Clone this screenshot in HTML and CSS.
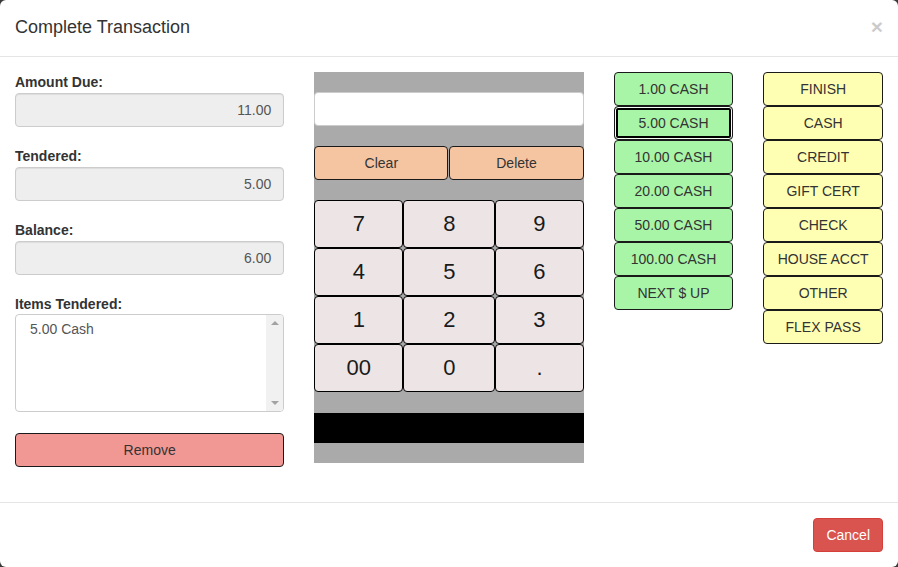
FILE: index.html
```html
<!DOCTYPE html>
<html lang="en">
<head>
<meta charset="utf-8">
<title>Complete Transaction</title>
<link rel="stylesheet" href="styles.css">
</head>
<body>
<div class="modal">
  <div class="modal-header">
    <h4 class="modal-title">Complete Transaction</h4>
    <button class="close" type="button">×</button>
  </div>
  <div class="modal-body">
    <div class="row">
      <div class="col col-4">
        <div class="form-group">
          <label>Amount Due:</label>
          <div class="field">11.00</div>
        </div>
        <div class="form-group">
          <label>Tendered:</label>
          <div class="field">5.00</div>
        </div>
        <div class="form-group">
          <label>Balance:</label>
          <div class="field">6.00</div>
        </div>
        <div class="form-group">
          <label>Items Tendered:</label>
          <div class="listbox">
            <div class="list-items">5.00 Cash</div>
            <div class="scrollbar">
              <span class="arrow up"></span>
              <span class="arrow down"></span>
            </div>
          </div>
        </div>
        <button class="btn-remove" type="button">Remove</button>
      </div>
      <div class="col col-4">
        <div class="pad">
          <div class="display"></div>
          <div class="edit-row">
            <button class="key-edit" type="button">Clear</button>
            <button class="key-edit" type="button">Delete</button>
          </div>
          <div class="keys">
            <button class="key" type="button">7</button>
            <button class="key" type="button">8</button>
            <button class="key" type="button">9</button>
            <button class="key" type="button">4</button>
            <button class="key" type="button">5</button>
            <button class="key" type="button">6</button>
            <button class="key" type="button">1</button>
            <button class="key" type="button">2</button>
            <button class="key" type="button">3</button>
            <button class="key" type="button">00</button>
            <button class="key" type="button">0</button>
            <button class="key" type="button">.</button>
          </div>
          <div class="black-bar"></div>
        </div>
      </div>
      <div class="col col-2">
        <div class="stack">
          <button class="tb green" type="button">1.00 CASH</button>
          <button class="tb green focused" type="button">5.00 CASH</button>
          <button class="tb green" type="button">10.00 CASH</button>
          <button class="tb green" type="button">20.00 CASH</button>
          <button class="tb green" type="button">50.00 CASH</button>
          <button class="tb green" type="button">100.00 CASH</button>
          <button class="tb green" type="button">NEXT $ UP</button>
        </div>
      </div>
      <div class="col col-2">
        <div class="stack">
          <button class="tb yellow" type="button">FINISH</button>
          <button class="tb yellow" type="button">CASH</button>
          <button class="tb yellow" type="button">CREDIT</button>
          <button class="tb yellow" type="button">GIFT CERT</button>
          <button class="tb yellow" type="button">CHECK</button>
          <button class="tb yellow" type="button">HOUSE ACCT</button>
          <button class="tb yellow" type="button">OTHER</button>
          <button class="tb yellow" type="button">FLEX PASS</button>
        </div>
      </div>
    </div>
  </div>
  <div class="modal-footer">
    <button class="btn-cancel" type="button">Cancel</button>
  </div>
</div>
</body>
</html>
```

FILE: styles.css
```css
* {
  box-sizing: border-box;
}

html, body {
  margin: 0;
  padding: 0;
}

body {
  background: #3a3a3a;
  font-family: "Liberation Sans", Arial, sans-serif;
  font-size: 14px;
  line-height: 1.42857;
  color: #333;
  width: 898px;
  height: 567px;
  overflow: hidden;
}

button {
  font-family: inherit;
  cursor: pointer;
}

.modal {
  width: 898px;
  height: 567px;
  background: #fff;
  border-radius: 6px;
  display: flex;
  flex-direction: column;
}

.modal-header {
  display: flex;
  justify-content: space-between;
  align-items: flex-start;
  padding: 15px;
  border-bottom: 1px solid #e5e5e5;
  height: 57px;
}

.modal-title {
  margin: 0;
  font-size: 18px;
  font-weight: normal;
  line-height: 1.42857;
  color: #333;
}

.close {
  border: 0;
  background: transparent;
  padding: 0;
  margin-top: 1px;
  margin-right: 0;
  font-size: 21px;
  font-weight: bold;
  line-height: 1;
  color: #000;
  opacity: 0.2;
}

.modal-body {
  padding: 15px;
  flex: 1;
}

.row {
  display: flex;
  margin: 0 -15px;
}

.col {
  padding: 0 15px;
}

.col-4 {
  width: 33.3333%;
}

.col-2 {
  width: 16.6667%;
}

.form-group {
  margin-bottom: 19px;
}

.form-group label {
  display: block;
  font-weight: bold;
  font-size: 14px;
  line-height: 20px;
  margin-bottom: 1px;
  color: #333;
}

.field {
  height: 34px;
  padding: 6px 12px;
  background: #eee;
  border: 1px solid #ccc;
  border-radius: 4px;
  text-align: right;
  color: #555;
  font-size: 14px;
  line-height: 20px;
  box-shadow: inset 0 1px 1px rgba(0, 0, 0, 0.075);
}

.listbox {
  display: flex;
  height: 98px;
  margin-top: -1px;
  border: 1px solid #ccc;
  border-radius: 4px;
  background: #fff;
  overflow: hidden;
}

.list-items {
  flex: 1;
  padding: 4px 14px;
  color: #555;
  font-size: 14px;
  line-height: 20px;
}

.scrollbar {
  width: 17px;
  background: #f1f1f1;
  display: flex;
  flex-direction: column;
  justify-content: space-between;
  align-items: center;
  padding: 6px 0;
}

.arrow {
  width: 0;
  height: 0;
  border-left: 4px solid transparent;
  border-right: 4px solid transparent;
}

.arrow.up {
  border-bottom: 4px solid #a3a3a3;
}

.arrow.down {
  border-top: 4px solid #a3a3a3;
}

.btn-remove {
  display: block;
  width: 100%;
  height: 34px;
  margin-top: 21px;
  margin-bottom: 20px;
  background: #f19794;
  border: 1px solid #1a1a1a;
  border-radius: 4px;
  color: #333;
  font-size: 14px;
}

.pad {
  background: #aaa;
  padding: 20px 0;
  display: flex;
  flex-direction: column;
  gap: 20px;
}

.display {
  height: 34px;
  background: #fff;
  border: 1px solid #ccc;
  border-radius: 4px;
}

.edit-row {
  display: grid;
  grid-template-columns: 134px 1fr;
  gap: 1px;
}

.key-edit {
  height: 34px;
  background: #f5c5a2;
  border: 1px solid #1a1a1a;
  border-radius: 4px;
  color: #333;
  font-size: 14px;
  padding: 0;
}

.keys {
  display: grid;
  grid-template-columns: 89px 92px 1fr;
  grid-auto-rows: 48px;
}

.key {
  background: #ede5e5;
  border: 1px solid #000;
  border-radius: 4px;
  font-size: 22px;
  color: #1a1a1a;
  padding: 0;
}

.black-bar {
  height: 30px;
  margin-top: 1px;
  background: #000;
}

.stack {
  display: flex;
  flex-direction: column;
}

.tb {
  height: 34px;
  width: 100%;
  border: 1px solid #1a1a1a;
  border-radius: 4px;
  color: #333;
  font-size: 14px;
  padding: 0;
}

.tb.green {
  background: #a8f5a8;
}

.tb.yellow {
  background: #ffffb3;
}

.tb.focused {
  box-shadow: inset 0 0 0 1px #f4fff4, inset 0 0 0 3px #000;
}

.modal-footer {
  display: flex;
  justify-content: flex-end;
  padding: 15px;
  border-top: 1px solid #e5e5e5;
}

.btn-cancel {
  height: 34px;
  padding: 6px 12px;
  background: #d9534f;
  border: 1px solid #d43f3a;
  border-radius: 4px;
  color: #fff;
  font-size: 14px;
  line-height: 20px;
}
```
